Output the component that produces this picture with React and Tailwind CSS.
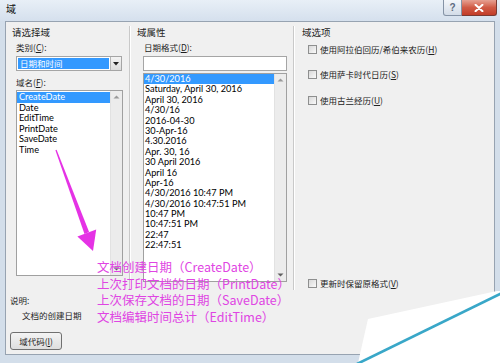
import React from 'react';

const cjk = "font-['Noto_Sans_CJK_SC',sans-serif]";
const ui = "font-['Lato','Noto_Sans_CJK_SC',sans-serif]";

const fieldNames = ['CreateDate', 'Date', 'EditTime', 'PrintDate', 'SaveDate', 'Time'];

const dateFormats = [
  '4/30/2016',
  'Saturday, April 30, 2016',
  'April 30, 2016',
  '4/30/16',
  '2016-04-30',
  '30-Apr-16',
  '4.30.2016',
  'Apr. 30, 16',
  '30 April 2016',
  'April 16',
  'Apr-16',
  '4/30/2016 10:47 PM',
  '4/30/2016 10:47:51 PM',
  '10:47 PM',
  '10:47:51 PM',
  '22:47',
  '22:47:51',
];

const notes = [
  '文档创建日期（CreateDate）',
  '上次打印文档的日期（PrintDate）',
  '上次保存文档的日期（SaveDate）',
  '文档编辑时间总计（EditTime）',
];

const Arrow = ({ up }) => (
  <svg width="7" height="4" viewBox="0 0 7 4" className="block">
    <path d={up ? 'M0.5 3.5 L3.5 0.5 L6.5 3.5 Z' : 'M0.5 0.5 L3.5 3.5 L6.5 0.5 Z'} fill={up ? '#9a9a9a' : '#606060'} />
  </svg>
);

const ScrollBar = () => (
  <div className="w-[12px] h-full flex flex-col items-center justify-between bg-[#ececec] border-l border-[#e2e2e2] py-[4px]">
    <Arrow up />
    <Arrow />
  </div>
);

const Check = ({ label, k, className = '' }) => (
  <div className={'flex items-center gap-[3px] h-[12px] ' + className}>
    <span className="w-[9px] h-[9px] border border-[#8e8f8f] bg-linear-to-br from-[#d8d8d8] to-[#fafafa]" />
    <span className={cjk + ' text-[8.5px] leading-[12px] text-[#222]'}>
      {label}(<u>{k}</u>)
    </span>
  </div>
);

const Header = ({ children }) => (
  <div className={cjk + ' mt-[4px] h-[12px] text-[9.5px] leading-[12px] text-[#1e1e1e]'}>{children}</div>
);

const Label = ({ children, className = '' }) => (
  <div className={cjk + ' h-[12px] text-[8.5px] leading-[12px] text-[#1e1e1e] ' + className}>{children}</div>
);

const Separator = () => (
  <div className="mt-[4px] h-[264px] w-[2px] border-l border-[#c9c9c9] bg-white shrink-0" />
);

export default function App() {
  return (
    <div className="relative w-[500px] h-[363px] overflow-hidden bg-[#d3deea]">
      {/* Title bar */}
      <div className="h-[21px] flex items-start justify-between bg-linear-to-b from-[#e8eff7] to-[#d5e0ed]">
        <span className={cjk + ' pl-[6px] pt-[3px] text-[10px] leading-[12px] text-[#111]'}>域</span>
        <div className="flex mr-[3px]">
          <div className="w-[19px] h-[16px] border border-[#8593a6] border-t-0 rounded-bl-[3px] bg-linear-to-b from-[#f3f6fa] to-[#d3dce8] flex items-center justify-center">
            <span className="font-['Liberation_Sans',sans-serif] text-[10px] font-bold leading-none text-[#5d6b80]">?</span>
          </div>
          <div className="w-[35px] h-[16px] border border-[#7a3a32] border-l-0 border-t-0 rounded-br-[3px] bg-linear-to-b from-[#e6a092] via-[#d05a45] to-[#c23c28] flex items-center justify-center">
            <svg width="10" height="8" viewBox="0 0 10 8">
              <path d="M1.5 0.8 L8.5 7.2 M8.5 0.8 L1.5 7.2" stroke="#fff" strokeWidth="2" strokeLinecap="round" />
            </svg>
          </div>
        </div>
      </div>

      {/* Client area */}
      <div className="mx-[5px] h-[334px] border border-[#97a3b1] bg-[#f0f0f0] flex flex-col">
        <div className="h-[268px] flex">
          {/* Left column */}
          <div className="w-[123px] pl-[6px] flex flex-col">
            <Header>请选择域</Header>
            <div className="pl-[4px] flex flex-col">
              <Label className="mt-[3px]">
                类别(<u>C</u>):
              </Label>
              <div className="mt-[3px] w-[106px] h-[15px] border border-[#a5a5a5] bg-white flex">
                <div className={cjk + ' m-[1px] flex-1 bg-[#3399ff] text-white text-[8.5px] leading-[11px] pl-[2px]'}>日期和时间</div>
                <div className="w-[11px] border-l border-[#b5b5b5] bg-linear-to-b from-[#f4f4f4] to-[#dcdcdc] flex items-center justify-center">
                  <svg width="6" height="4" viewBox="0 0 6 4">
                    <path d="M0 0 L6 0 L3 3.5 Z" fill="#222" />
                  </svg>
                </div>
              </div>
              <Label className="mt-[5px]">
                域名(<u>F</u>):
              </Label>
              <div className="mt-[2px] w-[107px] h-[186px] border border-[#a0a0a0] bg-white flex">
                <div className="flex-1 pt-[1px]">
                  {fieldNames.map((n, i) => (
                    <div
                      key={n}
                      className={
                        ui +
                        ' h-[10.6px] text-[9.2px] leading-[10.6px] pl-[2px] ' +
                        (i === 0 ? 'bg-[#3399ff] text-white' : 'text-black')
                      }
                    >
                      {n}
                    </div>
                  ))}
                </div>
                <ScrollBar />
              </div>
            </div>
          </div>

          <Separator />

          {/* Middle column */}
          <div className="w-[162px] pl-[6px] flex flex-col">
            <Header>域属性</Header>
            <Label className="mt-[3px] pl-[7px]">
              日期格式(<u>D</u>):
            </Label>
            <div className="mt-[3px] ml-[6px] w-[144px] h-[15px] border border-[#a5a5a5] bg-white" />
            <div className="mt-[2px] ml-[6px] w-[144px] h-[209px] border border-[#a0a0a0] bg-white flex">
              <div className="flex-1">
                {dateFormats.map((f, i) => (
                  <div
                    key={f}
                    className={
                      ui +
                      ' h-[10.4px] text-[9.2px] leading-[10.4px] pl-[1px] ' +
                      (i === 0 ? 'bg-[#3399ff] text-white' : 'text-black')
                    }
                  >
                    {f}
                  </div>
                ))}
              </div>
              <ScrollBar />
            </div>
          </div>

          <Separator />

          {/* Right column */}
          <div className="flex-1 pl-[7px] flex flex-col">
            <Header>域选项</Header>
            <div className="pl-[6px] flex flex-col flex-1">
              <Check className="mt-[5px]" label="使用阿拉伯回历/希伯来农历" k="H" />
              <Check className="mt-[13px]" label="使用萨卡时代日历" k="S" />
              <Check className="mt-[14px]" label="使用古兰经历" k="U" />
              <Check className="mt-auto mb-[1px]" label="更新时保留原格式" k="V" />
            </div>
          </div>
        </div>

        {/* Bottom */}
        <div className="pl-[4px] flex flex-col">
          <Label className="mt-[4px]">说明:</Label>
          <Label className="mt-[3px] pl-[12px]">文档的创建日期</Label>
          <div
            className={
              cjk +
              ' mt-[11px] w-[52px] h-[18px] rounded-[3px] border border-[#707070] bg-linear-to-b from-[#f4f4f4] to-[#dedede] flex items-center justify-center text-[8.5px] leading-none text-[#1e1e1e]'
            }
          >
            域代码(<u>I</u>)
          </div>
        </div>
      </div>

      {/* Annotation text */}
      <div className={cjk + ' absolute left-[97px] top-[259px] text-[12.5px] leading-[16.5px] text-[#df45e3]'}>
        {notes.map((n) => (
          <div key={n} className="whitespace-nowrap">
            {n}
          </div>
        ))}
      </div>

      {/* Arrow and page curl */}
      <svg className="absolute left-0 top-0 pointer-events-none" width="500" height="363" viewBox="0 0 500 363">
        <polygon points="55.4,150.2 56.6,149.8 89.1,232.1 84.5,233.9" fill="#e532e5" />
        <polygon points="77.4,236.5 96.2,229.5 93,251" fill="#e532e5" />
        <polygon points="368,319 497,291 500,291 500,363 358,363" fill="#ffffff" />
        <line x1="501" y1="293.5" x2="357" y2="364" stroke="#39a7c8" strokeWidth="2.6" />
      </svg>
    </div>
  );
}
